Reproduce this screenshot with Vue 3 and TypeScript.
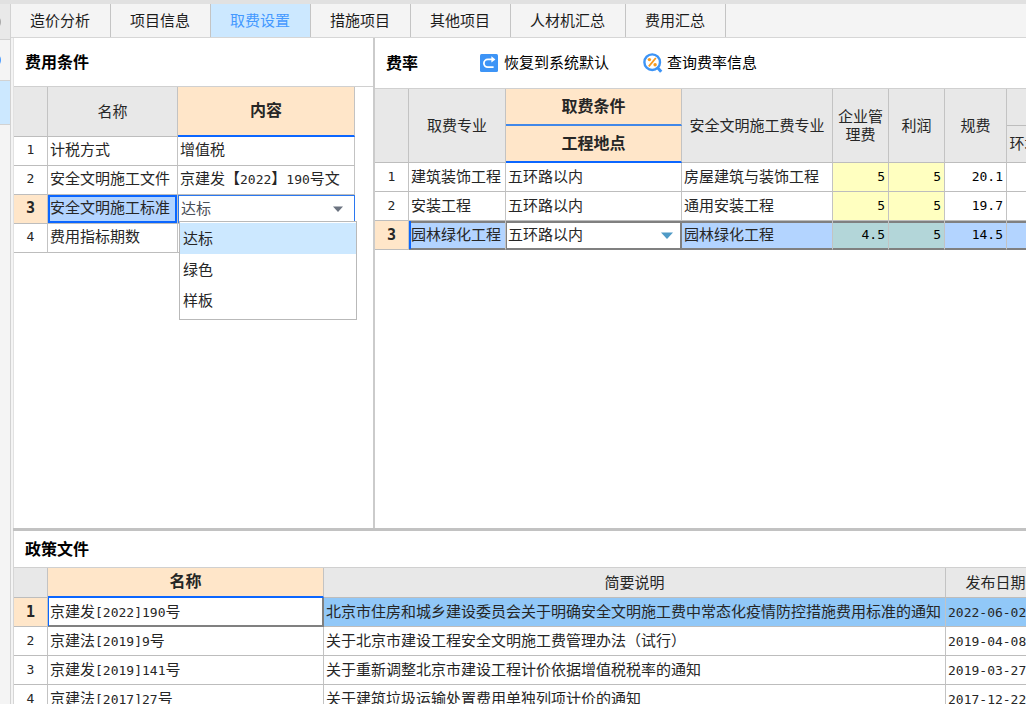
<script setup lang="ts">
import { ref } from 'vue'

interface Run {
  text: string
  latin: boolean
}

interface Rate {
  major: string
  place: string
  safety: string
  manage: string
  profit: string
  fee: string
}

const tabs: string[] = ['造价分析', '项目信息', '取费设置', '措施项目', '其他项目', '人材机汇总', '费用汇总']
const activeTab = ref('取费设置')

const conditions = [
  { name: '计税方式', value: '增值税' },
  { name: '安全文明施工文件', value: '京建发【2022】190号文' },
  { name: '安全文明施工标准', value: '达标' },
  { name: '费用指标期数', value: '' },
]
const standards: string[] = ['达标', '绿色', '样板']
const standard = ref('达标')
const listOpen = ref(true)

const rates: Rate[] = [
  { major: '建筑装饰工程', place: '五环路以内', safety: '房屋建筑与装饰工程', manage: '5', profit: '5', fee: '20.1' },
  { major: '安装工程', place: '五环路以内', safety: '通用安装工程', manage: '5', profit: '5', fee: '19.7' },
  { major: '园林绿化工程', place: '五环路以内', safety: '园林绿化工程', manage: '4.5', profit: '5', fee: '14.5' },
]
const place = ref('五环路以内')

const policies = [
  { name: '京建发[2022]190号', note: '北京市住房和城乡建设委员会关于明确安全文明施工费中常态化疫情防控措施费用标准的通知', date: '2022-06-02' },
  { name: '京建法[2019]9号', note: '关于北京市建设工程安全文明施工费管理办法（试行）', date: '2019-04-08' },
  { name: '京建发[2019]141号', note: '关于重新调整北京市建设工程计价依据增值税税率的通知', date: '2019-03-27' },
  { name: '京建法[2017]27号', note: '关于建筑垃圾运输处置费用单独列项计价的通知', date: '2017-12-22' },
]

// Splits a string so that digits and ASCII punctuation get the narrow face.
function runs(text: string): Run[] {
  return (text.match(/[\x21-\x7e]+|[^\x21-\x7e]+/g) ?? []).map((t) => ({
    text: t,
    latin: /^[\x21-\x7e]/.test(t),
  }))
}

function pick(option: string): void {
  standard.value = option
  listOpen.value = false
}
</script>

<template>
  <div class="app">
    <aside class="rail">
      <div class="rail-cell rail-top"><i class="dot grey"></i></div>
      <div class="rail-cell rail-mid"><i class="dot blue"></i></div>
      <div class="rail-cell rail-on"></div>
    </aside>

    <div class="main">
      <nav class="tabs" role="tablist">
        <button
          v-for="t in tabs"
          :key="t"
          type="button"
          role="tab"
          class="tab"
          :class="{ active: t === activeTab }"
          :aria-selected="t === activeTab"
          @click="activeTab = t"
        >{{ t }}</button>
      </nav>

      <div class="upper">
        <section class="panel cond">
          <header class="head"><h2>费用条件</h2></header>
          <div class="sheet">
            <table class="grid cond-grid">
              <colgroup><col class="w-num" /><col class="w-name" /><col class="w-value" /></colgroup>
              <thead>
                <tr><th></th><th>名称</th><th class="hot underlined">内容</th></tr>
              </thead>
              <tbody>
                <tr v-for="(c, i) in conditions" :key="c.name">
                  <td class="num" :class="{ current: i === 2 }">{{ i + 1 }}</td>
                  <td :class="{ chosen: i === 2 }">{{ c.name }}</td>
                  <td v-if="i === 2" class="edit">
                    <div class="combo">
                      <select v-model="standard" aria-label="安全文明施工标准" @mousedown.prevent="listOpen = !listOpen">
                        <option v-for="s in standards" :key="s">{{ s }}</option>
                      </select>
                      <svg class="arrow" width="10" height="6" viewBox="0 0 10 6"><path d="M0 0.5H10L5 6Z" fill="#6b7380" /></svg>
                      <ul v-if="listOpen" class="list" role="listbox">
                        <li
                          v-for="s in standards"
                          :key="s"
                          role="option"
                          :aria-selected="s === standard"
                          :class="{ on: s === standard }"
                          @click="pick(s)"
                        >{{ s }}</li>
                      </ul>
                    </div>
                  </td>
                  <td v-else>
                    <span v-for="(r, k) in runs(c.value)" :key="k" :class="{ latin: r.latin }">{{ r.text }}</span>
                  </td>
                </tr>
              </tbody>
            </table>
          </div>
        </section>

        <section class="panel rate">
          <header class="head">
            <h2>费率</h2>
            <button type="button" class="tool">
              <svg width="18" height="18" viewBox="0 0 18 18">
                <rect width="18" height="18" rx="1.5" fill="#3d94f6" />
                <path d="M13.6 13.2H7.8A3.9 3.9 0 0 1 7.8 5.4H12" fill="none" stroke="#fff" stroke-width="1.8" />
                <path d="M11.4 2.2L15.4 5.4L11.4 8.6Z" fill="#fff" />
              </svg>
              恢复到系统默认
            </button>
            <button type="button" class="tool query">
              <svg width="20" height="20" viewBox="0 0 20 20">
                <path d="M14.2 14.2L18.2 18.8" stroke="#3d94f6" stroke-width="3" />
                <circle cx="9.2" cy="9.2" r="7.8" fill="#fff" stroke="#3d94f6" stroke-width="2.4" />
                <path d="M12.8 5L5.8 13.4" stroke="#f79a1e" stroke-width="1.8" />
                <circle cx="6.4" cy="6.6" r="1.7" fill="#f79a1e" />
                <circle cx="12.1" cy="11.8" r="1.7" fill="#f79a1e" />
              </svg>
              查询费率信息
            </button>
          </header>
          <div class="sheet">
            <table class="grid rate-grid">
              <colgroup>
                <col class="w-rnum" /><col class="w-major" /><col class="w-place" /><col class="w-safety" />
                <col class="w-fee" /><col class="w-fee" /><col class="w-gui" /><col class="w-env" />
              </colgroup>
              <thead>
                <tr>
                  <th rowspan="2"></th>
                  <th rowspan="2">取费专业</th>
                  <th class="hot thin">取费条件</th>
                  <th rowspan="2">安全文明施工费专业</th>
                  <th rowspan="2" class="wrap">企业管<br />理费</th>
                  <th rowspan="2">利润</th>
                  <th rowspan="2">规费</th>
                  <th></th>
                </tr>
                <tr>
                  <th class="hot underlined">工程地点</th>
                  <th>环境保护</th>
                </tr>
              </thead>
              <tbody>
                <tr v-for="(r, i) in rates" :key="r.major" :class="{ picked: i === 2 }">
                  <td class="num" :class="{ current: i === 2 }">{{ i + 1 }}</td>
                  <td class="first">{{ r.major }}</td>
                  <td v-if="i === 2" class="edit">
                    <div class="combo">
                      <select v-model="place" aria-label="工程地点">
                        <option>五环路以内</option>
                      </select>
                      <svg class="arrow" width="12" height="7" viewBox="0 0 12 7"><path d="M0 0.5H12L6 7Z" fill="#4f9ac6" /></svg>
                    </div>
                  </td>
                  <td v-else>{{ r.place }}</td>
                  <td>{{ r.safety }}</td>
                  <td class="amount yellow">{{ r.manage }}</td>
                  <td class="amount yellow">{{ r.profit }}</td>
                  <td class="amount">{{ r.fee }}</td>
                  <td></td>
                </tr>
              </tbody>
            </table>
          </div>
        </section>
      </div>

      <section class="panel policy">
        <header class="head low"><h2>政策文件</h2></header>
        <div class="sheet">
          <table class="grid policy-grid">
            <colgroup><col class="w-num" /><col class="w-doc" /><col /><col class="w-date" /></colgroup>
            <thead>
              <tr><th></th><th class="hot underlined">名称</th><th>简要说明</th><th>发布日期</th></tr>
            </thead>
            <tbody>
              <tr v-for="(p, i) in policies" :key="p.name" :class="{ marked: i === 0 }">
                <td class="num" :class="{ current: i === 0 }">{{ i + 1 }}</td>
                <td class="doc">
                  <span v-for="(r, k) in runs(p.name)" :key="k" :class="{ latin: r.latin }">{{ r.text }}</span>
                </td>
                <td>{{ p.note }}</td>
                <td><span class="latin">{{ p.date }}</span></td>
              </tr>
            </tbody>
          </table>
        </div>
      </section>
    </div>
  </div>
</template>

<style>
body {
  margin: 0;
  overflow: hidden;
}
</style>

<style scoped>
.app {
  box-sizing: border-box;
  height: 100vh;
  display: flex;
  border-top: 4px solid #e1e1e1;
  background: #f4f4f4;
  color: #262626;
  font: 15px/20px "Liberation Sans", "Noto Sans CJK SC", sans-serif;
  overflow: hidden;
}
.app * {
  box-sizing: border-box;
}

.rail {
  flex: 0 0 11px;
  border-right: 1px solid #d2d2d2;
  overflow: hidden;
}
.rail-cell {
  display: flex;
  align-items: center;
  border-bottom: 1px solid #d2d2d2;
}
.rail-top {
  height: 36px;
  background: #e9e9e9;
}
.rail-mid {
  height: 41px;
}
.rail-on {
  height: 44px;
  background: #cce8ff;
}
.dot {
  flex: none;
  width: 14px;
  height: 14px;
  margin-left: -13px;
  border-radius: 50%;
}
.grey {
  background: #a8a8a8;
}
.blue {
  background: #4a9cff;
}

.main {
  flex: 1;
  min-width: 0;
  display: flex;
  flex-direction: column;
}
.tabs {
  flex: none;
  display: flex;
  height: 34px;
  border-bottom: 1px solid #d6d6d6;
}
.tab {
  padding: 0 20px 0 19px;
  border: 0;
  border-right: 1px solid #c4c4c4;
  background: transparent;
  color: #1c1c1c;
  font: inherit;
  white-space: nowrap;
}
.tab.active {
  background: #cce8ff;
  color: #4499ff;
}

.upper {
  flex: 1;
  min-height: 0;
  display: flex;
  margin-left: 2px;
  border-bottom: 3px solid #c2c2c2;
}
.panel {
  background: #fff;
  min-width: 0;
  min-height: 0;
  display: flex;
  flex-direction: column;
}
.cond {
  flex: 0 0 362px;
  border-right: 2px solid #cbcbcb;
  border-left: 1px solid #e2e2e2;
}
.rate {
  flex: 1;
}
.policy {
  flex: 0 0 173px;
  margin-left: 2px;
  border-left: 1px solid #d6d6d6;
}
.head {
  flex: none;
  display: flex;
  align-items: center;
  height: 48px;
  padding-left: 11px;
  color: #000;
}
.rate .head {
  height: 50px;
}
.head.low {
  height: 36px;
}
h2 {
  margin: 0;
  padding-top: 2px;
  font-size: 16px;
  line-height: 20px;
}
.tool {
  display: flex;
  align-items: center;
  gap: 6px;
  margin-left: 62px;
  padding: 0;
  border: 0;
  background: none;
  color: #000;
  font: inherit;
}
.tool.query {
  gap: 4px;
  margin-left: 34px;
}
.sheet {
  flex: 1;
  min-height: 0;
  border-top: 1px solid #d0d0d0;
}
.rate .sheet,
.policy .sheet {
  overflow: hidden;
}

.grid {
  table-layout: fixed;
  border-collapse: separate;
  border-spacing: 0;
}
.w-num { width: 34px; }
.w-name { width: 130px; }
.w-value { width: 177px; }
.w-rnum { width: 34px; }
.w-major { width: 97px; }
.w-place { width: 176px; }
.w-safety { width: 151px; }
.w-fee { width: 56px; }
.w-gui { width: 62px; }
.w-env { width: 66px; }
.w-doc { width: 276px; }
.w-date { width: 100px; }
.cond-grid { width: 341px; }
.rate-grid { width: 698px; }
.policy-grid {
  width: 100%;
  min-width: 1032px;
}

th,
td {
  height: 29px;
  padding: 0 2px;
  border-right: 1px solid #c3c3c3;
  border-bottom: 1px solid #bdbdbd;
  line-height: 20px;
  white-space: nowrap;
}
td {
  background: #fff;
}
.cond td:not(.edit) {
  padding-bottom: 2px;
}
th {
  padding: 0;
  background: #e8e8e8;
  font-weight: 400;
  text-align: center;
  overflow: hidden;
}
.cond-grid th { height: 50px; }
.rate-grid th { height: 37px; }
.policy-grid th { height: 30px; }
th.wrap {
  line-height: 18px;
}
th.hot {
  background: #ffe6c9;
  font-size: 16px;
  font-weight: 700;
}
th.underlined {
  border-bottom: 2px solid #0b66ff;
}
th.thin {
  border-bottom: 2px solid #4288e8;
}
.num {
  text-align: center;
  font-family: "DejaVu Sans Mono", monospace;
  font-size: 13px;
}
.num.current {
  background: #ffe6c9;
  font-size: 15px;
  font-weight: 700;
}
.latin {
  font-family: "DejaVu Sans Mono", monospace;
  font-size: 13px;
}
.chosen {
  background: #b3d4ff;
  box-shadow: inset 0 0 0 2px #0b66ff;
}
.edit {
  padding: 0;
}
.cond .edit {
  border-right-color: #2b78f0;
  box-shadow: inset 1px 1px #2b78f0;
}

.combo {
  position: relative;
  display: flex;
  align-items: center;
  height: 28px;
}
.combo select {
  width: 100%;
  height: 24px;
  padding: 0 2px;
  border: 0;
  appearance: none;
  background: transparent;
  color: #262626;
  font: inherit;
  outline: 0;
}
.cond select {
  padding-left: 3px;
  color: #4a4f57;
}
.arrow {
  position: absolute;
  right: 11px;
  top: 11px;
  pointer-events: none;
}
.rate .arrow {
  right: 8px;
}
.list {
  position: absolute;
  z-index: 2;
  top: 26px;
  left: 1px;
  width: 178px;
  margin: 0;
  padding: 1px 0 3px;
  border: 1px solid #b9b9b9;
  background: #fff;
  list-style: none;
}
.list li {
  height: 31px;
  padding-left: 3px;
  line-height: 31px;
}
.list li.on {
  background: #cce8ff;
}

.amount {
  padding-right: 3px;
  color: #000;
  font-family: "DejaVu Sans Mono", monospace;
  font-size: 13px;
  text-align: right;
}
.yellow {
  background: #ffffc0;
}
.picked td:not(.num):not(.edit) {
  background: #b3d4ff;
  box-shadow: inset 0 2px #808080, inset 0 -1px #808080;
}
.picked td:not(.num) {
  border-bottom-color: #808080;
}
.picked td.yellow:not(.num):not(.edit) {
  background: #b3d6d9;
}
.picked td.first:not(.num):not(.edit) {
  box-shadow: inset 2px 0 #0b66ff, inset 0 2px #808080, inset 0 -1px #808080;
}
.picked .edit {
  border-right-color: #808080;
  box-shadow: inset 1px 2px #808080, inset -1px -1px #808080;
}
.marked td:not(.num):not(.doc) {
  background: #91c8f8;
}
.marked .doc {
  border-color: #808080;
  box-shadow: inset 1px 0 #0b66ff, inset -1px -1px #808080;
}
</style>
